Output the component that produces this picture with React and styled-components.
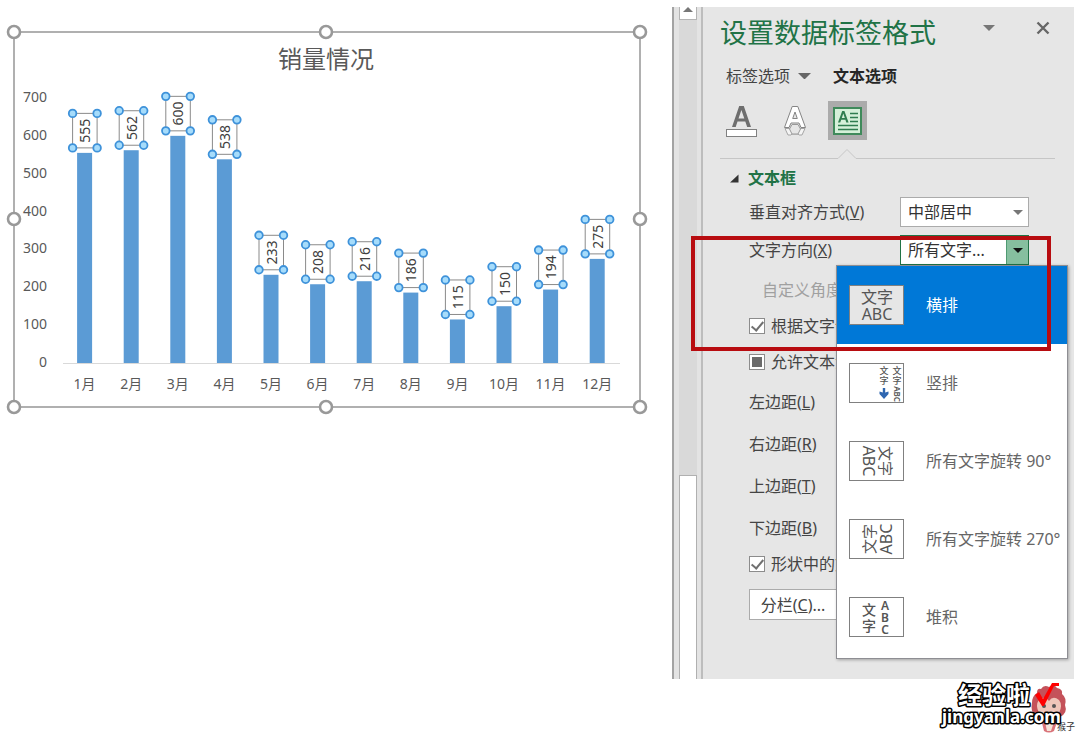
import React, { useEffect, useRef } from "react";
import styled, { createGlobalStyle } from "styled-components";

const sans = `"Noto Sans", "Noto Sans CJK SC", sans-serif`;

const GlobalStyle = createGlobalStyle`
  * { box-sizing: border-box; }
  body {
    margin: 0;
    background: #fff;
    color: #444;
    font-family: ${sans};
    font-size: 16px;
    line-height: 24px;
  }
  button, select, input { font: inherit; color: inherit; }
`;

const Page = styled.div`
  display: flex;
  flex-direction: column;
  padding-top: 7px;
`;

const Workspace = styled.main`
  display: flex;
  align-items: stretch;
  padding-right: 6px;
`;

const Sheet = styled.section`
  flex: 1;
  min-width: 0;
`;

const ChartSvg = styled.svg`
  display: block;
  width: 100%;
  font-family: ${sans};
  font-size: 14px;
  fill: #595959;
`;

const SidePane = styled.aside`
  position: relative;
  flex: 0 0 402px;
  display: flex;
  min-height: 672px;
  background: #e6e6e6;
`;

const ScrollBar = styled.div`
  display: flex;
  flex-direction: column;
  width: 31px;
  padding: 0 4px 0 5px;
  border-left: 2px solid #a3a3a3;
  border-right: 2px solid #bdbdbd;
  background: #e3e3e3;
`;

const ScrollButton = styled.button`
  display: flex;
  justify-content: center;
  height: 13px;
  padding: 0;
  border: 1px solid #b4b4b4;
  border-top: 0;
  background: #fff;
`;

const Track = styled.div`
  flex: 1;
  display: flex;
  align-items: flex-end;
  background: #d9d9d9;
`;

const Thumb = styled.div`
  width: 100%;
  height: 204px;
  border: 1px solid #b0b0b0;
  border-bottom: 0;
  background: #fff;
`;

const Pane = styled.div`
  flex: 1;
  min-width: 0;
  padding: 0 18px 0 17px;
`;

const Header = styled.header`
  display: flex;
  align-items: center;
  height: 52px;
`;

const Title = styled.h1`
  flex: 1;
  margin: 0;
  color: #217346;
  font-size: 27px;
  font-weight: 400;
  line-height: 40px;
`;

const HeaderActions = styled.div`
  display: flex;
  gap: 36px;
  padding: 0 4px 10px 0;
`;

const IconButton = styled.button`
  display: grid;
  place-items: center;
  width: 18px;
  height: 18px;
  padding: 0;
  border: 0;
  background: none;
`;

const Tabs = styled.nav`
  display: flex;
  align-items: center;
  gap: 22px;
  height: 34px;
  padding-left: 6px;
`;

const Tab = styled.button`
  display: flex;
  align-items: center;
  gap: 8px;
  padding: 0;
  border: 0;
  background: none;
  color: ${(p) => (p.$active ? "#262626" : "#444")};
  font-weight: ${(p) => (p.$active ? 700 : 400)};
`;

const ToolRow = styled.div`
  display: flex;
  gap: 14px;
  margin: 8px 0 9px;
  padding-left: 2px;
`;

const Tool = styled.button`
  display: grid;
  place-items: center;
  width: 39px;
  height: 39px;
  padding: 0;
  border: 0;
  background: ${(p) => (p.$active ? "#ababab" : "none")};
`;

const Divider = styled.svg`
  display: block;
`;

const SectionHead = styled.h2`
  display: flex;
  align-items: center;
  gap: 9px;
  height: 30px;
  margin: 3px 0 0;
  padding-left: 10px;
  color: #217346;
  font-size: 16px;
  font-weight: 700;
`;

const Form = styled.form`
  padding-left: 29px;
`;

const Field = styled.div`
  display: flex;
  align-items: center;
  justify-content: space-between;
  height: ${(p) => p.$height || 42}px;
  padding-right: 27px;
  white-space: nowrap;
`;

const SubLabel = styled.span`
  padding-left: 13px;
  color: #a0a0a0;
`;

const Checks = styled.div`
  display: flex;
  flex-direction: column;
  gap: 6px;
`;

const Margins = styled.div`
  margin-top: 4px;
`;

const CheckLabel = styled.label`
  display: flex;
  align-items: center;
  gap: 6px;
  height: 30px;
  white-space: nowrap;
`;

const CheckInput = styled.input`
  appearance: none;
  display: grid;
  place-items: center;
  flex: none;
  width: 16px;
  height: 16px;
  margin: 0;
  border: 1px solid #8c8c8c;
  background: #fff;
  &:checked::after {
    content: "";
    width: 5px;
    height: 10px;
    margin-bottom: 3px;
    border: solid #707070;
    border-width: 0 2px 2px 0;
    transform: rotate(40deg);
  }
  &:indeterminate::after {
    content: "";
    width: 10px;
    height: 10px;
    background: #6b6b6b;
  }
`;

const SelectBox = styled.div`
  position: relative;
  width: 129px;
`;

const Select = styled.select`
  appearance: none;
  display: block;
  width: 100%;
  height: 30px;
  padding: 0 24px 0 7px;
  border: 1px solid ${(p) => (p.$open ? "#217346" : "#ababab")};
  border-radius: 0;
  background: #fff;
  color: #333;
  line-height: 24px;
`;

const SelectArrow = styled.span`
  position: absolute;
  top: 1px;
  right: 1px;
  bottom: 1px;
  display: grid;
  place-items: center;
  width: 22px;
  border-left: 1px solid ${(p) => (p.$open ? "#4f9a72" : "transparent")};
  background: ${(p) => (p.$open ? "#86bf9f" : "none")};
  pointer-events: none;
`;

const Menu = styled.div`
  position: absolute;
  z-index: 1;
  top: 100%;
  right: -39px;
  width: 232px;
  padding-bottom: 2px;
  border: 1px solid #8e8e93;
  background: #fff;
  box-shadow: 1px 1px 3px rgba(0, 0, 0, 0.3);
`;

const MenuItem = styled.button`
  display: flex;
  align-items: center;
  gap: 22px;
  width: 100%;
  height: 78px;
  padding: 0 0 0 12px;
  border: 0;
  background: ${(p) => (p.$active ? "#0078d7" : "#fff")};
  color: ${(p) => (p.$active ? "#fff" : "#666")};
  white-space: nowrap;
`;

const Glyph = styled.svg`
  flex: none;
  border: 1px solid #808080;
  background: ${(p) => (p.$active ? "#e6e6e6" : "#fff")};
  font-family: ${sans};
  font-size: 16px;
  fill: #555;
  text-anchor: middle;
`;

const PlainButton = styled.button`
  display: block;
  width: 88px;
  height: 31px;
  margin-top: 10px;
  padding: 0;
  border: 1px solid #ababab;
  background: #fff;
`;

const Highlight = styled.div`
  position: absolute;
  z-index: 2;
  top: 229px;
  left: 19px;
  right: 23px;
  height: 115px;
  border: 4px solid #b80c10;
  pointer-events: none;
`;

const Footer = styled.footer`
  display: flex;
  justify-content: flex-end;
  svg { display: block; }
`;

const sales = [555, 562, 600, 538, 233, 208, 216, 186, 115, 150, 194, 275];
const ticks = [0, 100, 200, 300, 400, 500, 600, 700];
const BASE = 363;
const STEP = 46.6;
const yOf = (v) => BASE - v * 0.3786;

function FrameHandles() {
  const points = [[14, 32], [326, 32], [640, 32], [14, 219], [640, 219], [14, 407], [326, 407], [640, 407]];
  return points.map(([x, y]) => (
    <circle key={`${x}-${y}`} cx={x} cy={y} r="6" fill="#fff" stroke="#999" strokeWidth="2.6" />
  ));
}

function Bar({ value, index }) {
  const cx = 84.6 + index * STEP;
  const top = yOf(value);
  const l = cx - 12;
  const r = cx + 12.5;
  const t = top - 39.5;
  const b = top - 5;
  return (
    <g>
      <rect x={cx - 7.5} y={top} width="15" height={BASE - top} fill="#5b9bd5" />
      <rect x={l} y={t} width={r - l} height={b - t} fill="#fff" stroke="#8a8a8a" />
      <text transform={`translate(${cx + 5.5} ${(t + b) / 2}) rotate(-90)`} textAnchor="middle" fill="#404040">
        {value}
      </text>
      {[[l, t], [r, t], [l, b], [r, b]].map(([x, y]) => (
        <circle key={`${x}-${y}`} cx={x} cy={y} r="3.8" fill="#a6dcfb" stroke="#3e92da" strokeWidth="1.8" />
      ))}
      <text x={cx} y="389" textAnchor="middle">{index + 1}月</text>
    </g>
  );
}

function Chart() {
  return (
    <ChartSvg viewBox="0 7 672 420" role="img" aria-label="销量情况">
      <rect x="14" y="32" width="626" height="375" fill="#fff" stroke="#b0b0b0" strokeWidth="2" />
      <text x="326" y="68" textAnchor="middle" fontSize="24">销量情况</text>
      {ticks.map((t) => (
        <text key={t} x="47" y={yOf(t) + 4} textAnchor="end">{t}</text>
      ))}
      <path d="M63 363.5H620" stroke="#d9d9d9" />
      {sales.map((v, i) => <Bar key={i} value={v} index={i} />)}
      <FrameHandles />
    </ChartSvg>
  );
}

function Down({ size = 10, color = "#777" }) {
  return (
    <svg width={size} height={size / 2} viewBox="0 0 10 5" aria-hidden="true">
      <path d="M0 0H10L5 5Z" fill={color} />
    </svg>
  );
}

function Check({ children, mixed }) {
  const ref = useRef(null);
  useEffect(() => {
    ref.current.indeterminate = !!mixed;
  }, [mixed]);
  return (
    <CheckLabel>
      <CheckInput ref={ref} type="checkbox" defaultChecked={!mixed} />
      <span>{children}</span>
    </CheckLabel>
  );
}

const glyphs = {
  horizontal: (
    <>
      <text x="27" y="17">文字</text>
      <text x="27" y="34">ABC</text>
    </>
  ),
  vertical: (
    <>
      <g fontSize="9" fontWeight="500">
        <text x="34" y="10">文</text>
        <text x="34" y="20">字</text>
        <text x="47" y="10">文</text>
        <text x="47" y="20">字</text>
      </g>
      <text transform="translate(44 30) rotate(90)" fontSize="8" fontWeight="600">ABC</text>
      <path d="M32.8 24H35.2V28.5L38.5 27.5V30L34 35L29.5 30V27.5L32.8 28.5Z" fill="#2f66b0" />
    </>
  ),
  rotate90: (
    <g transform="translate(27 19) rotate(90)">
      <text x="0" y="-3" fontSize="15">文字</text>
      <text x="0" y="14">ABC</text>
    </g>
  ),
  rotate270: (
    <g transform="translate(27 19) rotate(-90)">
      <text x="0" y="-2" fontSize="15">文字</text>
      <text x="0" y="15">ABC</text>
    </g>
  ),
  stacked: (
    <>
      <g fontSize="14" fontWeight="500">
        <text x="19" y="17">文</text>
        <text x="19" y="33">字</text>
      </g>
      <g fontSize="12" fontWeight="600">
        <text x="35" y="12">A</text>
        <text x="35" y="24">B</text>
        <text x="35" y="36">C</text>
      </g>
    </>
  ),
};

const directions = [
  ["horizontal", "横排"],
  ["vertical", "竖排"],
  ["rotate90", "所有文字旋转 90°"],
  ["rotate270", "所有文字旋转 270°"],
  ["stacked", "堆积"],
];

function DirectionMenu() {
  return (
    <Menu role="listbox" aria-label="文字方向">
      {directions.map(([key, label], i) => (
        <MenuItem key={key} type="button" role="option" aria-selected={i === 0} $active={i === 0}>
          <Glyph width="55" height="40" viewBox="0 0 53 38" $active={i === 0} aria-hidden="true">
            {glyphs[key]}
          </Glyph>
          {label}
        </MenuItem>
      ))}
    </Menu>
  );
}

function FillIcon() {
  return (
    <svg width="33" height="33" viewBox="0 0 33 33" aria-hidden="true">
      <path d="M7 23L14.2 2H18.8L26 23H22.2L20.3 17.6H12.5L10.7 23ZM13.5 14.6H19.3L16.4 6Z" fill="#6e6e6e" />
      <rect x="1.5" y="25.5" width="30" height="7" fill="#fff" stroke="#808080" />
    </svg>
  );
}

function EffectIcon() {
  return (
    <svg width="24" height="33" viewBox="0 0 24 33" aria-hidden="true">
      <path d="M2 24.5H8L10 21H14L16 24.5H22L19 31H16L15 30H9L8 31H5Z" fill="#f4f4f4" stroke="#a6a6a6" />
      <path d="M1.5 23.5L9.2 2.5H14.8L22.5 23.5H18L16 19H8L6 23.5Z" fill="#fff" stroke="#858585" />
      <path d="M9.7 14.5H14.3L12 8Z" fill="#e6e6e6" stroke="#858585" />
      <path d="M9 20.5H15L17.5 25L15 30H9L6.5 25Z" fill="#e6e6e6" stroke="#999" />
    </svg>
  );
}

function TextBoxIcon() {
  return (
    <svg width="29" height="28" viewBox="0 0 29 28" aria-hidden="true">
      <rect x="1" y="1" width="27" height="26" fill="#d5f0d9" stroke="#3f8a5b" strokeWidth="2" />
      <path d="M5 15.5L9.2 4H11.4L15.6 15.5H13.3L12.4 12.7H8.2L7.2 15.5ZM8.8 10.9H11.8L10.3 6.5Z" fill="#2f7d4f" />
      <path d="M17 6.5H25M17 10.5H25M17 14.5H25M5 18.5H25M5 22.5H25" stroke="#2f7d4f" strokeWidth="1.4" />
    </svg>
  );
}

const margins = [["左边距", "L"], ["右边距", "R"], ["上边距", "T"], ["下边距", "B"]];

function FormatPane() {
  return (
    <Pane>
      <Header>
        <Title>设置数据标签格式</Title>
        <HeaderActions>
          <IconButton type="button" aria-label="选项"><Down size={12} /></IconButton>
          <IconButton type="button" aria-label="关闭">
            <svg width="14" height="14" viewBox="0 0 14 14" aria-hidden="true">
              <path d="M1.5 1.5L12.5 12.5M12.5 1.5L1.5 12.5" stroke="#666" strokeWidth="2.4" />
            </svg>
          </IconButton>
        </HeaderActions>
      </Header>
      <Tabs>
        <Tab type="button">标签选项 <Down size={13} color="#666" /></Tab>
        <Tab type="button" $active>文本选项</Tab>
      </Tabs>
      <ToolRow>
        <Tool type="button" aria-label="文本填充"><FillIcon /></Tool>
        <Tool type="button" aria-label="文字效果"><EffectIcon /></Tool>
        <Tool type="button" aria-label="文本框" $active><TextBoxIcon /></Tool>
      </ToolRow>
      <Divider width="335" height="11" viewBox="0 0 335 11" aria-hidden="true">
        <path d="M0 9.5H118L127 0.5L136 9.5H335" fill="none" stroke="#c6c6c6" />
      </Divider>
      <SectionHead>
        <svg width="9" height="9" viewBox="0 0 9 9" aria-hidden="true"><path d="M8.5 0.5V8.5H0Z" fill="#333" /></svg>
        文本框
      </SectionHead>
      <Form>
        <Field $height={38}>
          <label htmlFor="valign">垂直对齐方式(<u>V</u>)</label>
          <SelectBox>
            <Select id="valign"><option>中部居中</option></Select>
            <SelectArrow><Down /></SelectArrow>
          </SelectBox>
        </Field>
        <Field $height={38}>
          <label htmlFor="direction">文字方向(<u>X</u>)</label>
          <SelectBox>
            <Select id="direction" $open><option>所有文字...</option></Select>
            <SelectArrow $open><Down color="#111" /></SelectArrow>
            <DirectionMenu />
          </SelectBox>
        </Field>
        <Field><SubLabel>自定义角度(<u>U</u>)</SubLabel></Field>
        <Checks>
          <Check>根据文字调整形状大小(<u>F</u>)</Check>
          <Check mixed>允许文本溢出形状(<u>W</u>)</Check>
        </Checks>
        <Margins>
          {margins.map(([name, key]) => (
            <Field key={key}><span>{name}(<u>{key}</u>)</span></Field>
          ))}
        </Margins>
        <Check>形状中的文字自动换行(<u>W</u>)</Check>
        <PlainButton type="button">分栏(<u>C</u>)...</PlainButton>
      </Form>
    </Pane>
  );
}

function Brand() {
  return (
    <Footer>
      <svg width="150" height="55" viewBox="0 0 150 55" role="img" aria-label="经验啦 jingyanla.com">
        <path d="M102 24Q102 17 107 14Q107 9 111 10Q114 5 119 8Q124 4 127 9Q133 10 132 15Q137 19 135 26Q138 34 130 38Q126 43 118 43Q110 43 106 37Q100 33 102 24Z" fill="#c4525a" />
        <path d="M119 22Q123 16 129 21Q133 26 129 34Q125 40 119 40Q113 40 109 34Q105 26 109 21Q115 16 119 22Z" fill="#efc6ba" />
        <circle cx="114" cy="27" r="2" fill="#555" />
        <circle cx="124" cy="27" r="2" fill="#555" />
        <path d="M111 40H128L124 52Q119 55 114 52Z" fill="#d9737a" />
        <path d="M115 43H124L121 52H117Z" fill="#f5e3d8" />
        <text x="127" y="51" fontFamily={sans} fontSize="9" fill="#333">猴子</text>
        <g
          fill="#fff"
          stroke="#000"
          strokeWidth="3"
          strokeLinejoin="round"
          paintOrder="stroke"
          fontWeight="700"
          fontFamily={sans}
        >
          <text x="28" y="25" fontSize="24">经验啦</text>
          <text x="12" y="44" fontSize="17">jingyanla.com</text>
        </g>
        <path d="M105 16L109 13L113 20L122 4H129V7H124L114 27H112Z" fill="#f00" />
      </svg>
    </Footer>
  );
}

export default function App() {
  return (
    <Page>
      <GlobalStyle />
      <Workspace>
        <Sheet><Chart /></Sheet>
        <SidePane>
          <ScrollBar>
            <ScrollButton type="button" aria-label="向上滚动">
              <svg width="10" height="6" viewBox="0 0 10 6" aria-hidden="true"><path d="M0 5H10L5 0Z" fill="#777" /></svg>
            </ScrollButton>
            <Track><Thumb /></Track>
          </ScrollBar>
          <FormatPane />
          <Highlight />
        </SidePane>
      </Workspace>
      <Brand />
    </Page>
  );
}
